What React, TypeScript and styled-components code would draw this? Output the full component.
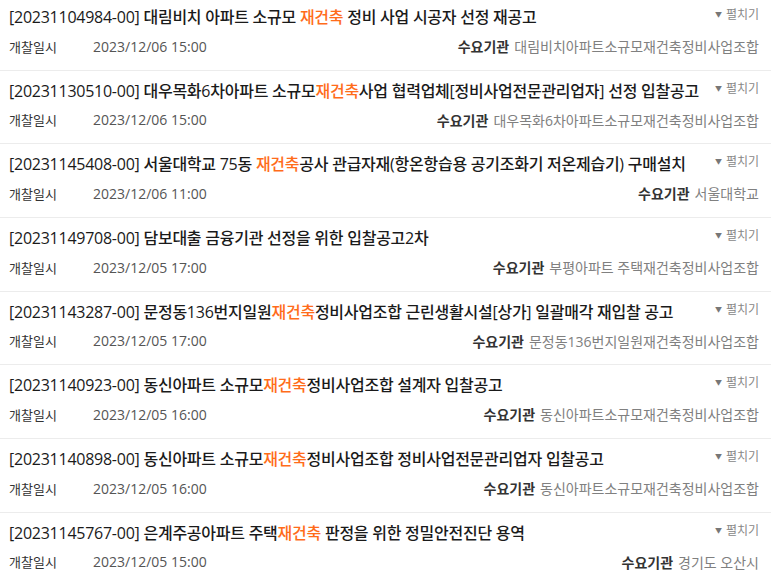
import React from 'react';
import styled, { createGlobalStyle } from 'styled-components';

type Bid = {
  no: string;
  before: string;
  keyword: string;
  after: string;
  date: string;
  agency: string;
};

const bids: Bid[] = [
  { no: '20231104984-00', before: '대림비치 아파트 소규모 ', keyword: '재건축', after: ' 정비 사업 시공자 선정 재공고', date: '2023/12/06 15:00', agency: '대림비치아파트소규모재건축정비사업조합' },
  { no: '20231130510-00', before: '대우목화6차아파트 소규모', keyword: '재건축', after: '사업 협력업체[정비사업전문관리업자] 선정 입찰공고', date: '2023/12/06 15:00', agency: '대우목화6차아파트소규모재건축정비사업조합' },
  { no: '20231145408-00', before: '서울대학교 75동 ', keyword: '재건축', after: '공사 관급자재(항온항습용 공기조화기 저온제습기) 구매설치', date: '2023/12/06 11:00', agency: '서울대학교' },
  { no: '20231149708-00', before: '담보대출 금융기관 선정을 위한 입찰공고2차', keyword: '', after: '', date: '2023/12/05 17:00', agency: '부평아파트 주택재건축정비사업조합' },
  { no: '20231143287-00', before: '문정동136번지일원', keyword: '재건축', after: '정비사업조합 근린생활시설[상가] 일괄매각 재입찰 공고', date: '2023/12/05 17:00', agency: '문정동136번지일원재건축정비사업조합' },
  { no: '20231140923-00', before: '동신아파트 소규모', keyword: '재건축', after: '정비사업조합 설계자 입찰공고', date: '2023/12/05 16:00', agency: '동신아파트소규모재건축정비사업조합' },
  { no: '20231140898-00', before: '동신아파트 소규모', keyword: '재건축', after: '정비사업조합 정비사업전문관리업자 입찰공고', date: '2023/12/05 16:00', agency: '동신아파트소규모재건축정비사업조합' },
  { no: '20231145767-00', before: '은계주공아파트 주택', keyword: '재건축', after: ' 판정을 위한 정밀안전진단 용역', date: '2023/12/05 15:00', agency: '경기도 오산시' },
];

const App = () => {
  return (
    <>
      <GlobalStyle />
      <List>
        {bids.map((bid) => (
          <Item key={bid.no}>
            <TitleRow>
              <Title>
                <BidNo>[{bid.no}]</BidNo> {bid.before}
                {bid.keyword && <Keyword>{bid.keyword}</Keyword>}
                {bid.after}
              </Title>
              <Toggle>
                <Caret>▼</Caret>펼치기
              </Toggle>
            </TitleRow>
            <MetaRow>
              <Label>개찰일시</Label>
              <DateText>{bid.date}</DateText>
              <Agency>
                <AgencyLabel>수요기관</AgencyLabel>
                <AgencyName>{bid.agency}</AgencyName>
              </Agency>
            </MetaRow>
          </Item>
        ))}
      </List>
    </>
  );
};

export default App;

const GlobalStyle = createGlobalStyle`
  html, body {
    margin: 0;
    padding: 0;
    background: #fff;
    overflow: hidden;
  }
  body {
    font-family: 'Open Sans', 'Noto Sans CJK KR', sans-serif;
    color: #222;
  }
`;

const List = styled.ul`
  list-style: none;
  width: 771px;
  margin: -3px 0 0;
  padding: 0;
`;

const Item = styled.li`
  padding: 9px 12px 12.7px 9px;
  border-bottom: 1px solid #ececec;
`;

const TitleRow = styled.div`
  display: flex;
  align-items: flex-start;
  justify-content: space-between;
`;

const Title = styled.p`
  margin: 0;
  font-size: 16px;
  line-height: 22px;
  font-weight: 500;
  color: #1a1a1a;
  letter-spacing: -0.25px;
  white-space: nowrap;
`;

const BidNo = styled.span`
  font-weight: 400;
`;

const Keyword = styled.span`
  color: #ff6c1a;
`;

const Toggle = styled.span`
  display: flex;
  align-items: center;
  flex-shrink: 0;
  margin-left: 16px;
  font-size: 12px;
  line-height: 18px;
  color: #888;
`;

const Caret = styled.span`
  font-size: 7px;
  margin-right: 4px;
  color: #777;
`;

const MetaRow = styled.div`
  display: flex;
  align-items: center;
  margin-top: 7px;
  height: 22px;
  font-size: 14px;
`;

const Label = styled.span`
  width: 84px;
  font-size: 13px;
  color: #333;
`;

const DateText = styled.span`
  color: #555;
`;

const Agency = styled.span`
  margin-left: auto;
  display: flex;
  align-items: center;
  gap: 5px;
`;

const AgencyLabel = styled.span`
  font-weight: 700;
  color: #333;
`;

const AgencyName = styled.span`
  color: #808080;
`;
